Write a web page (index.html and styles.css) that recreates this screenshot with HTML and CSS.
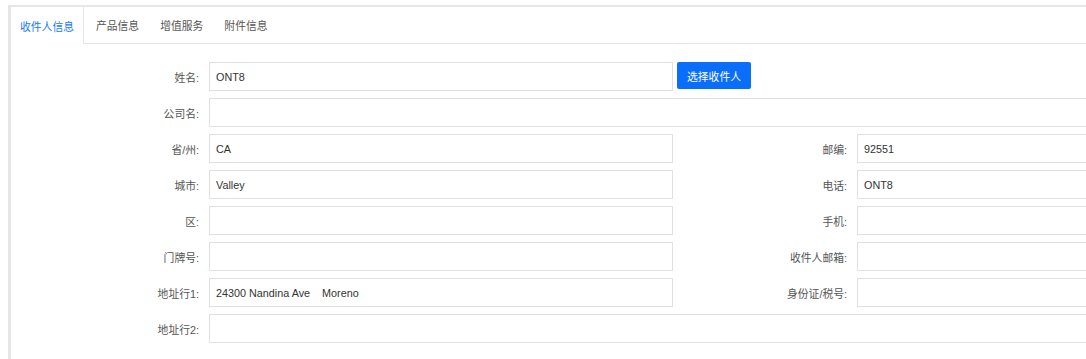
FILE: index.html
```html
<!DOCTYPE html>
<html lang="zh-CN">
<head>
<meta charset="UTF-8" />
<title>收件人信息</title>
<link rel="stylesheet" href="styles.css">
</head>
<body>
<div class="panel">
    <div class="tabs">
        <span class="tab active">收件人信息</span>
        <span class="tab">产品信息</span>
        <span class="tab">增值服务</span>
        <span class="tab">附件信息</span>
    </div>

    <form class="form-grid">
        <label class="label">姓名:</label>
        <input class="field" type="text" value="ONT8" />
        <button class="pick-btn" type="button">选择收件人</button>

        <label class="label">公司名:</label>
        <input class="field wide" type="text" value="" />

        <label class="label">省/州:</label>
        <input class="field" type="text" value="CA" />
        <label class="label right">邮编:</label>
        <input class="field" type="text" value="92551" />

        <label class="label">城市:</label>
        <input class="field" type="text" value="Valley" />
        <label class="label right">电话:</label>
        <input class="field" type="text" value="ONT8" />

        <label class="label">区:</label>
        <input class="field" type="text" value="" />
        <label class="label right">手机:</label>
        <input class="field" type="text" value="" />

        <label class="label">门牌号:</label>
        <input class="field" type="text" value="" />
        <label class="label right">收件人邮箱:</label>
        <input class="field" type="text" value="" />

        <label class="label">地址行1:</label>
        <input class="field" type="text" value="24300 Nandina Ave    Moreno" />
        <label class="label right">身份证/税号:</label>
        <input class="field" type="text" value="" />

        <label class="label">地址行2:</label>
        <input class="field wide" type="text" value="" />
    </form>
</div>
</body>
</html>
```

FILE: styles.css
```css
/* base */
body {
    margin: 0;
    font-family: "Liberation Sans", "Noto Sans CJK SC", sans-serif;
    font-size: 10.8px;
    color: #555;
    background: #fff;
    overflow: hidden;
}

/* panel is wider than the window, so clip it at the right edge */
.panel {
    margin: 5px 0 0 8px;
    border-top: 2px solid #e6e6e6;
    border-left: 3px solid #e6e6e6;
    height: 352px;
    overflow: hidden;
}

/* tab bar */
.tabs {
    display: flex;
    height: 36px;
    border-bottom: 1px solid #e6e6e6;
}

.tab {
    display: flex;
    align-items: center;
    padding: 0 9px;
    color: #555;
    cursor: pointer;
}

.tab + .tab {
    margin-left: 3px;
}

.tab.active {
    color: #1677ff;
    background: #fff;
    border-right: 1px solid #e6e6e6;
    height: 37px;
}

/* recipient form */
.form-grid {
    display: grid;
    grid-template-columns: 198px 464px 184px 464px;
    grid-auto-rows: 29px;
    row-gap: 7px;
    align-items: center;
    padding-top: 18px;
    margin: 0;
}

.label {
    grid-column: 1;
    text-align: right;
    padding-right: 10px;
    color: #555;
}

.label.right {
    grid-column: 3;
}

.field {
    box-sizing: border-box;
    height: 29px;
    width: 100%;
    margin: 0;
    padding: 0 6px;
    border: 1px solid #e0e0e0;
    border-radius: 0;
    font-family: "Liberation Sans", "Noto Sans CJK SC", sans-serif;
    font-size: 10.8px;
    color: #333;
    background: #fff;
    outline: none;
}

.field.wide {
    grid-column: 2 / 5;
}

.pick-btn {
    grid-column: 3;
    justify-self: start;
    align-self: start;
    margin-left: 4px;
    height: 27px;
    width: 74px;
    padding: 0;
    border: none;
    border-radius: 2px;
    background: #0a6efa;
    color: #fff;
    font-family: "Liberation Sans", "Noto Sans CJK SC", sans-serif;
    font-size: 10.8px;
    cursor: pointer;
}
```
